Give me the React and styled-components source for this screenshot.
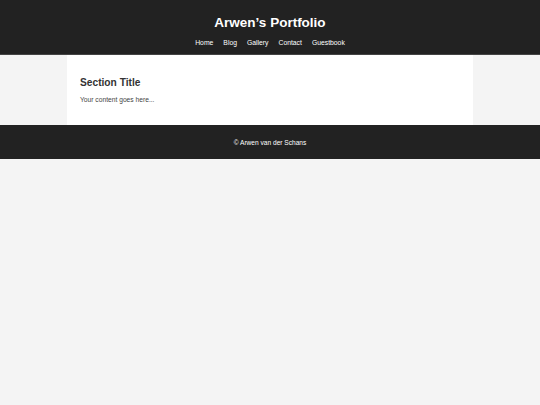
import React from 'react';
import styled, { createGlobalStyle } from 'styled-components';

const GlobalStyle = createGlobalStyle`
  html, body {
    margin: 0;
    padding: 0;
    background-color: #f4f4f4;
    font-family: "Liberation Sans", Arial, sans-serif;
    color: #333;
  }
`;

const Header = styled.header`
  background-color: #222;
  color: #fff;
  text-align: center;
  padding: 14px 0 0;
  height: 40px;
  border-bottom: 1px solid #444;
`;

const Title = styled.h1`
  margin: 0;
  font-size: 13.5px;
  font-weight: bold;
  line-height: 17px;
`;

const NavList = styled.ul`
  list-style: none;
  margin: 7px 0 0;
  padding: 0;
  display: flex;
  justify-content: center;
  gap: 10px;
`;

const NavItem = styled.li`
  font-size: 6.8px;
  line-height: 9px;
  color: #fff;
`;

const Main = styled.main`
  width: 406px;
  margin: 0 auto;
  background-color: #fff;
  padding: 21px 13px 20px;
  box-sizing: border-box;
  height: 70px;
`;

const SectionTitle = styled.h2`
  margin: 0;
  font-size: 10.2px;
  line-height: 13px;
  color: #333;
`;

const Text = styled.p`
  margin: 6px 0 0;
  font-size: 6.7px;
  line-height: 9px;
  color: #444;
`;

const Footer = styled.footer`
  background-color: #222;
  color: #fff;
  text-align: center;
  height: 34px;
  display: flex;
  align-items: center;
  justify-content: center;
  font-size: 6.6px;
`;

export default function App() {
  return (
    <>
      <GlobalStyle />
      <Header>
        <Title>Arwen’s Portfolio</Title>
        <NavList>
          <NavItem>Home</NavItem>
          <NavItem>Blog</NavItem>
          <NavItem>Gallery</NavItem>
          <NavItem>Contact</NavItem>
          <NavItem>Guestbook</NavItem>
        </NavList>
      </Header>
      <Main>
        <SectionTitle>Section Title</SectionTitle>
        <Text>Your content goes here...</Text>
      </Main>
      <Footer>© Arwen van der Schans</Footer>
    </>
  );
}
